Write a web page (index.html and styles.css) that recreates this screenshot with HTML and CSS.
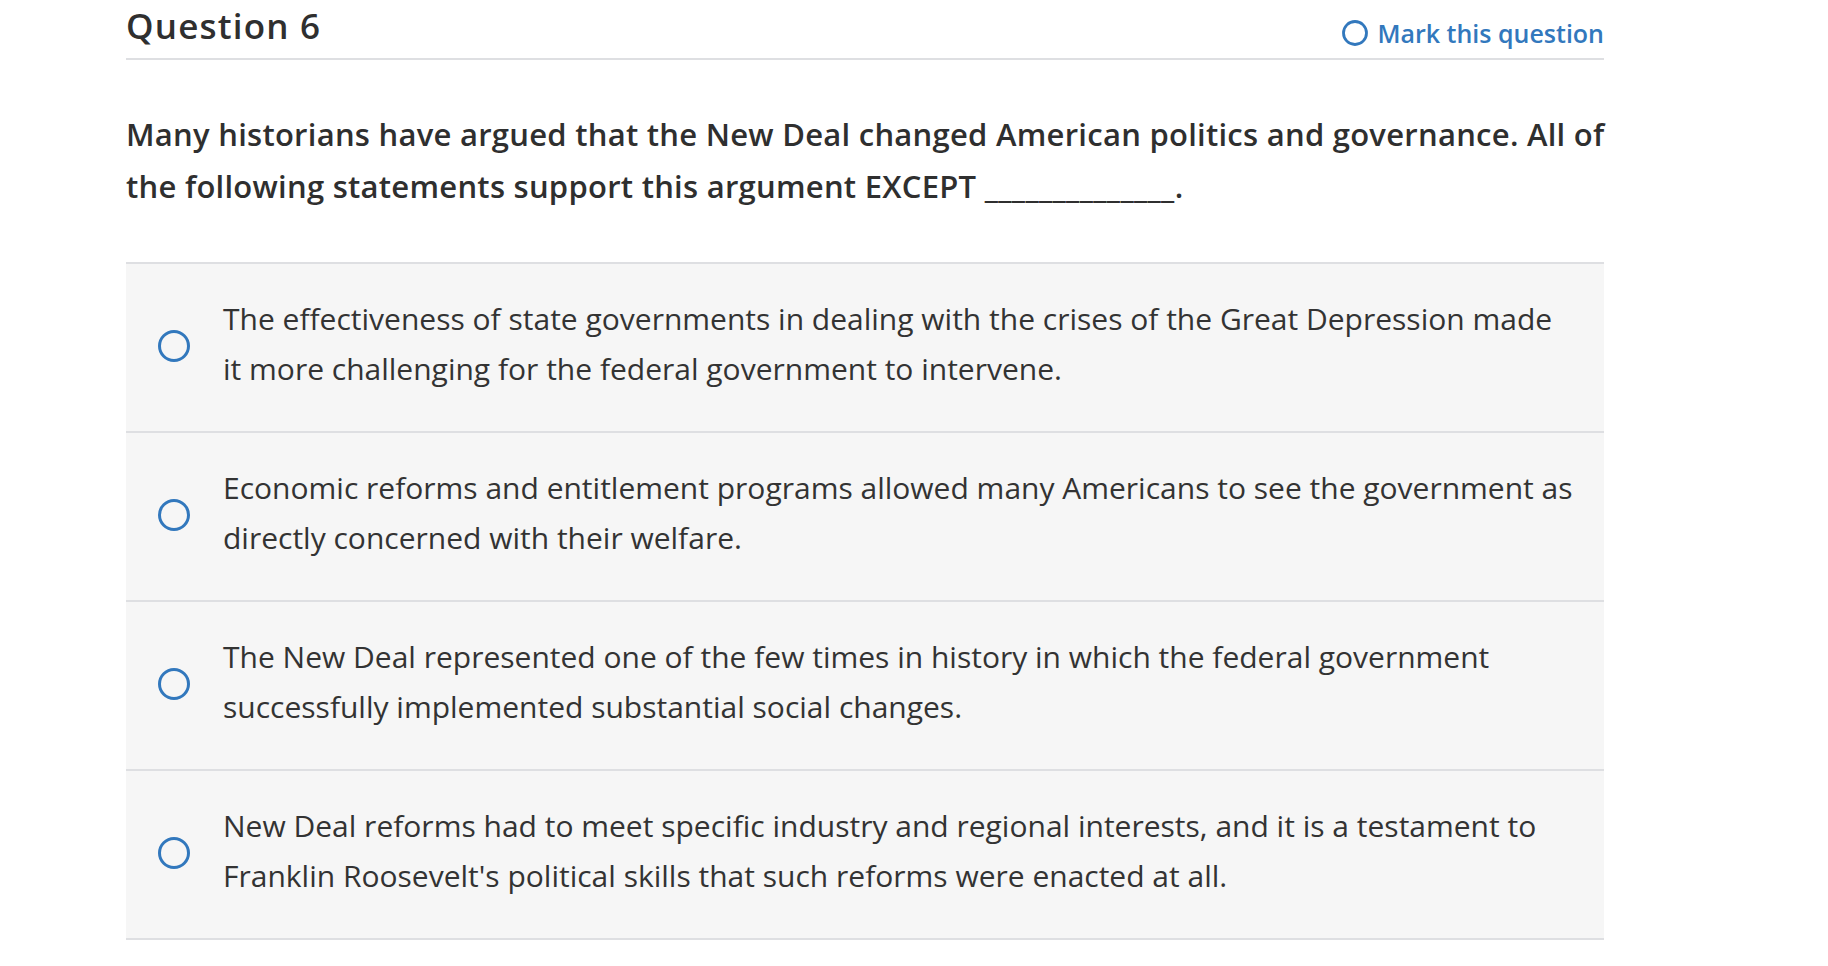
FILE: index.html
```html
<!DOCTYPE html>
<html lang="en">
<head>
<meta charset="utf-8">
<title>Question 6</title>
<link rel="stylesheet" href="styles.css">
</head>
<body>
<main class="page">
  <header class="q-header">
    <h1 class="q-title">Question 6</h1>
    <a class="mark" href="#">
      <svg class="mark-icon" width="26" height="26" viewBox="0 0 26 26" aria-hidden="true"><circle cx="13" cy="13" r="11.5" fill="none" stroke="#3278bd" stroke-width="2.8"/></svg>
      <span>Mark this question</span>
    </a>
  </header>

  <p class="prompt">Many historians have argued that the New Deal changed American politics and governance. All of<br>the following statements support this argument EXCEPT <span class="blank">______________</span>.</p>

  <ul class="options">
    <li class="option">
      <span class="radio"></span>
      <span class="option-text">The effectiveness of state governments in dealing with the crises of the Great Depression made<br>it more challenging for the federal government to intervene.</span>
    </li>
    <li class="option">
      <span class="radio"></span>
      <span class="option-text">Economic reforms and entitlement programs allowed many Americans to see the government as<br>directly concerned with their welfare.</span>
    </li>
    <li class="option">
      <span class="radio"></span>
      <span class="option-text">The New Deal represented one of the few times in history in which the federal government<br>successfully implemented substantial social changes.</span>
    </li>
    <li class="option">
      <span class="radio"></span>
      <span class="option-text">New Deal reforms had to meet specific industry and regional interests, and it is a testament to<br>Franklin Roosevelt's political skills that such reforms were enacted at all.</span>
    </li>
  </ul>
</main>
</body>
</html>
```

FILE: styles.css
```css
* { box-sizing: border-box; }

html, body {
  margin: 0;
  padding: 0;
  background: #ffffff;
}

body {
  font-family: "Open Sans", Lato, "Liberation Sans", sans-serif;
  color: #333333;
  font-variant-ligatures: none;
}

.page {
  width: 1478px;
  margin-left: 126px;
}

.q-header {
  display: flex;
  justify-content: space-between;
  align-items: flex-start;
  border-bottom: 2px solid #dedfe2;
  height: 60px;
}

.q-title {
  margin: 0;
  padding-top: 3px;
  font-size: 35px;
  line-height: 46px;
  font-weight: 600;
  letter-spacing: 1.2px;
  color: #2f2f2f;
}

.mark {
  display: flex;
  align-items: center;
  gap: 9px;
  margin-top: 18px;
  color: #3278bd;
  font-size: 25px;
  font-weight: 600;
  line-height: 30px;
  text-decoration: none;
}

.mark-icon {
  display: block;
  flex: none;
}

.prompt {
  margin: 48px 0 50px 0;
  font-size: 31px;
  line-height: 52px;
  font-weight: 600;
  letter-spacing: 0.26px;
  white-space: nowrap;
  color: #2f2f2f;
}

.blank {
  letter-spacing: 0.4px;
}

.options {
  list-style: none;
  margin: 0;
  padding: 0;
  border-bottom: 2px solid #dedfe2;
}

.option {
  display: flex;
  align-items: center;
  background: #f6f6f6;
  border-top: 2px solid #dedfe2;
  padding: 0 16px 0 32px;
  min-height: 169px;
}

.radio {
  flex: none;
  width: 32px;
  height: 32px;
  border: 3.5px solid #3278bd;
  border-radius: 50%;
  margin-bottom: 3px;
}

.option-text {
  flex: 1;
  padding: 30px 0 37px 33px;
  font-size: 30px;
  line-height: 50px;
  font-weight: 400;
  white-space: nowrap;
  color: #333333;
}
```
